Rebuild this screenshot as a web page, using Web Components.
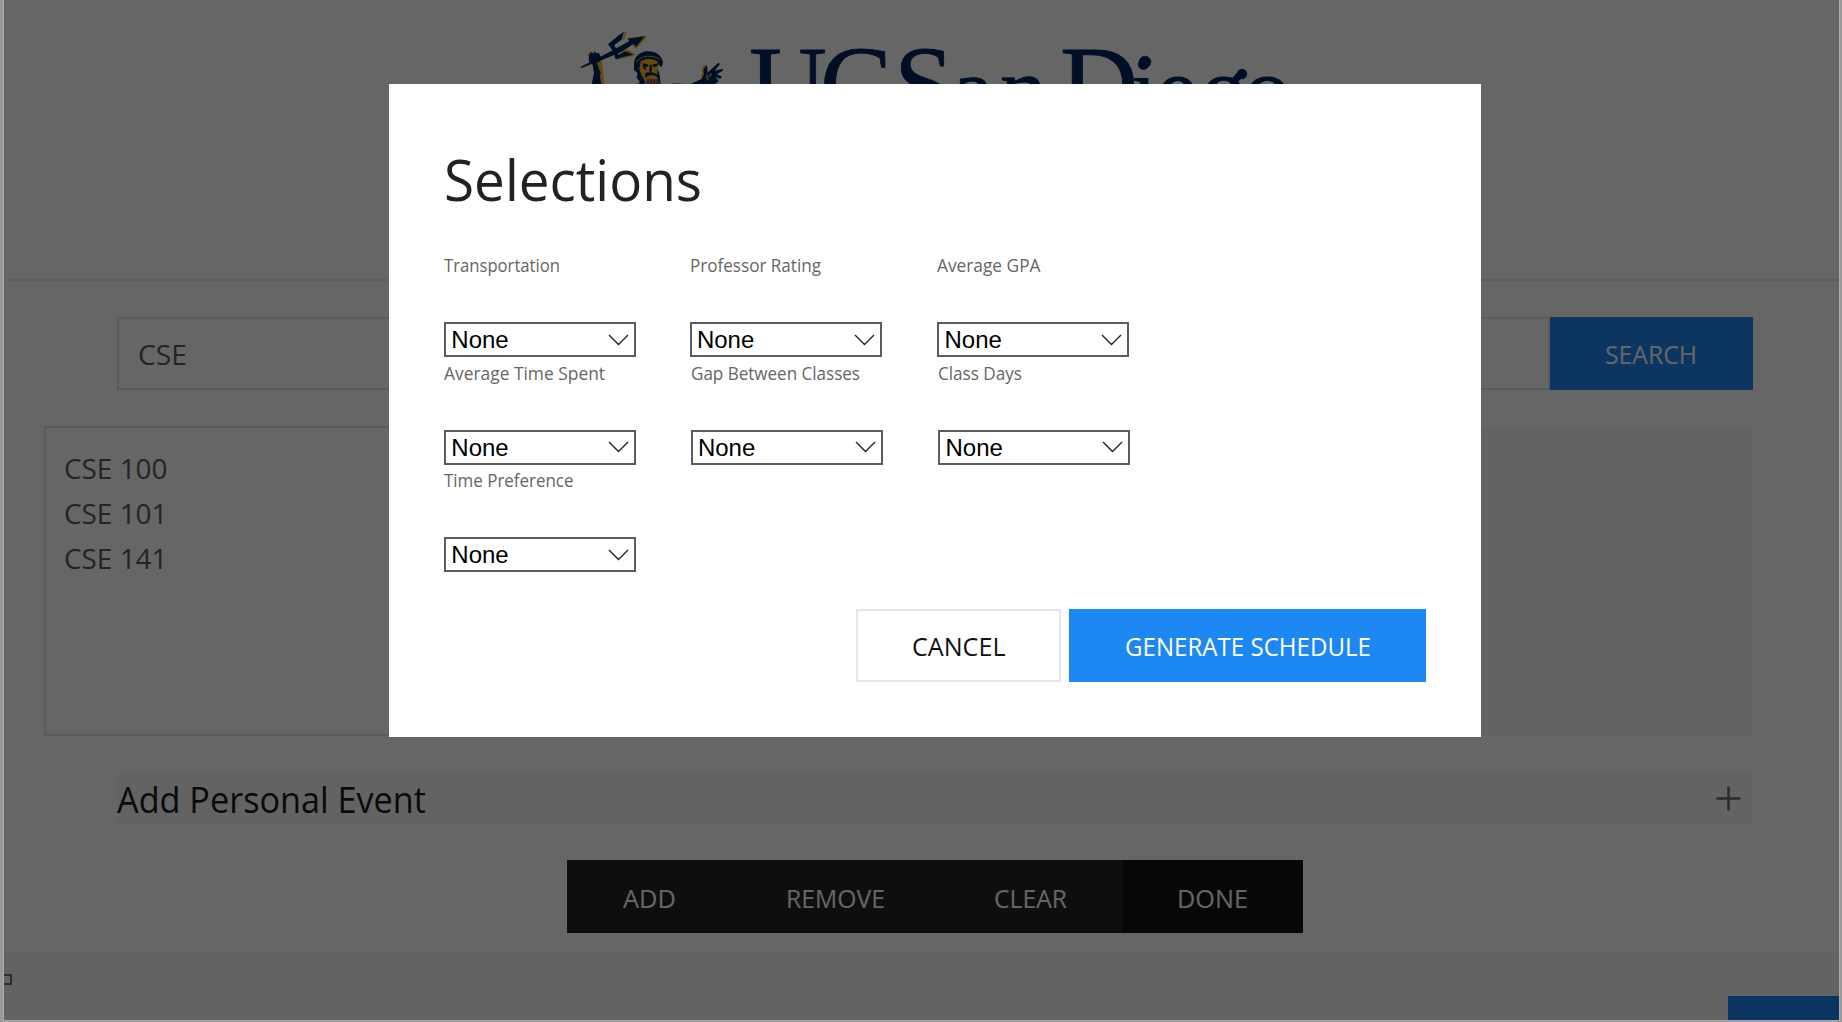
<!DOCTYPE html>
<html lang="en">
<head>
<meta charset="utf-8">
<title>Schedule planner</title>
<style>
html,body{margin:0;height:100%;overflow:hidden;background:#999}
body{font-family:"Open Sans","Noto Sans",sans-serif;color:#1a1a1a}
</style>
</head>
<body>
<planner-app></planner-app>
<script>
function define(name, html, ready) {
  const t = document.createElement('template');
  t.innerHTML = html;
  customElements.define(name, class extends HTMLElement {
    constructor() { super(); this.attachShadow({mode: 'open'}).appendChild(t.content.cloneNode(true)); }
    connectedCallback() { if (ready) ready(this, this.shadowRoot); }
  });
}

/* A single line of text condensed to a given width. */
define('fit-text', `
<style>:host{display:block;white-space:nowrap;flex:none}span{display:inline-block;transform-origin:0 50%}</style>
<span><slot></slot></span>`, (el, root) => {
  const s = root.querySelector('span'), w = +el.getAttribute('w');
  el.style.width = w + 'px';
  s.style.transform = 'scaleX(' + w / s.getBoundingClientRect().width + ')';
});

define('action-button', `
<style>
:host{display:flex;justify-content:center;box-sizing:border-box;height:73px;line-height:74px;font-size:26px;flex:none;color:#fff;background:#1e88f2}
:host([kind=outline]){background:#fff;color:#111;border:2.5px solid #e6e6e6;line-height:71px}
:host([kind=dark]){background:#252525;line-height:76px}
:host([kind=darker]){background:#121212;line-height:76px}
</style><slot></slot>`);

define('school-logo', `
<style>:host{display:block;height:120px}svg{display:block;margin-left:551px}</style>
<svg width="760" height="120" viewBox="555 0 760 120">
  <g transform="translate(570 24) scale(.33333)">
    <path fill="#ffb81c" d="M165 20l4 4-7 26-4-2zM172 42l57-7-1 6-28 33-6-2zM160 80l12-4 27 17-34 9-26 6zM50 96l12-16 8 14zM74 112l20-12 4 32 6 48H90z"/>
    <path fill="#002360" d="M31 129L100 94 150 67 178 51 172 44 224 37 198 68 190 60 155 83 105 104 34 132z"/>
    <path fill="#002360" d="M162 23L155 47 133 63 143 84 134 88 114 61 146 34z"/>
    <path fill="#002360" d="M131 86L145 79 145 93 166 82 190 92 162 98 137 106z"/>
    <path fill="#002360" d="M56 104L58 90 66 84 70 90 74 80 78 88 86 86 95 104 88 114 80 116 92 146 90 158 94 180H65L72 148 68 122 58 114z"/>
    <path fill="#ffb81c" d="M208 108Q236 92 268 112L264 138 270 180H204L208 138z"/>
    <path fill="#002360" d="M192 124Q190 92 226 82 262 78 276 104 282 118 274 130L266 122 262 112Q238 98 212 112L208 136 214 152 210 172 200 162 202 146 192 138z"/>
    <path fill="none" stroke="#ffb81c" stroke-width="2.5" d="M198 112Q230 84 272 106"/>
    <path fill="#002360" d="M218 118l18 4-2 6-8 0 2 12-8-8zM246 122l18-4-2 8-10 4zM240 122l5 0 1 20-8 2zM214 152l12 22-4 6h-14zM226 148q16-8 34 2l6 12-14-8h-14l-12 8zM262 134l6 14 4 32h-8l-2-24z"/>
    <path fill="#cc8850" d="M230 165h34l4 15h-42z"/>
    <path fill="none" stroke="#002360" stroke-width="3" d="M234 166v14M243 166v14M252 166v14M261 167v13"/>
    <path fill="#ffb81c" d="M398 130l8-10 6 24 20-12 4 24-14 16-30 6z"/>
    <path fill="#002360" d="M362 180L396 164 402 148 400 136 411 124 413 146 445 116 450 120 434 140 458 134 458 141 440 150 456 158 450 165 436 158 446 172 434 180z"/>
    <path fill="none" stroke="#ffb81c" stroke-width="4" d="M410 152l4 16M424 148l-6 10"/>
    <path fill="#8b98a8" d="M302 180q18-6 38 0z"/>
  </g>
  <g fill="#002360" stroke="#002360" stroke-width=".8" font-family="Liberation Serif, serif" font-size="108">
    <text y="121" x="749 820">UC</text>
    <text y="121" x="894 952 1000">S<tspan font-size="94">an</tspan></text>
    <text y="121" x="1060 1131 1156 1201 1244">D<tspan font-size="94">iego</tspan></text>
    <circle cx="1145" cy="62" r="5.8"/><circle cx="1242" cy="74" r="4.8"/>
    <path fill="none" stroke-width="3" d="M1232 84q3-10 10-12"/>
  </g>
</svg>`);

define('course-list', `
<style>
:host{display:block;box-sizing:border-box;width:818px;height:310px;border:2px solid #e4e4e4;padding:19px 0 0 18px;font-size:27px;line-height:44.6px;color:#5a5a5a}
</style><slot></slot>`);

define('planner-page', `
<style>
:host{display:block;height:1020px;background:#fff}
header{height:279px;border-bottom:2px solid #ebebeb;overflow:hidden}
.search{display:flex;margin:36.4px 86px 0 113px;height:73px}
.field{flex:1;box-sizing:border-box;border:2px solid #e4e4e4;padding:1px 0 0 19px;font-size:26.5px;line-height:71px;color:#5a5a5a}
.lists{display:flex;justify-content:space-between;margin:36px 86px 0 40px}
.picked{width:818px;background:#f8f8f8}
.event{display:flex;justify-content:space-between;align-items:center;height:51px;margin:36.6px 86px 0 113px;background:#f8f8f8;font-size:36px;line-height:48px}
.event fit-text{padding-top:3px}
.event svg{margin-right:12.5px}
.bar{display:flex;width:736px;margin:36px 0 0 563px}
footer{margin-top:18px;height:69px;background:#f8f8f8;display:flex;justify-content:space-between}
.stub{box-sizing:border-box;width:8px;height:11px;border:2px solid #777;border-left:0;margin-top:23px}
.corner{width:111px;height:24px;margin-top:45px;background:#1b84f0}
</style>
<header><school-logo></school-logo></header>
<div class="search"><div class="field"><fit-text w="49">CSE</fit-text></div>
<action-button style="width:203.5px"><fit-text w="92">SEARCH</fit-text></action-button></div>
<div class="lists"><course-list><fit-text w="103.5">CSE 100</fit-text><fit-text w="103.5">CSE 101</fit-text><fit-text w="103.5">CSE 141</fit-text></course-list><div class="picked"></div></div>
<div class="event"><fit-text w="309">Add Personal Event</fit-text>
<svg width="25" height="25" viewBox="0 0 25 25"><path d="M12.5 .5v24M.5 12.5h24" stroke="#666" stroke-width="2.4"/></svg></div>
<div class="bar">
<action-button kind="dark" style="width:164px"><fit-text w="53">ADD</fit-text></action-button>
<action-button kind="dark" style="width:208px"><fit-text w="99">REMOVE</fit-text></action-button>
<action-button kind="dark" style="width:183px"><fit-text w="73">CLEAR</fit-text></action-button>
<action-button kind="darker" style="width:181px"><fit-text w="71">DONE</fit-text></action-button></div>
<footer><div class="stub"></div><div class="corner"></div></footer>`);

define('select-field', `
<style>
:host{display:flex;flex-direction:column;gap:45px;align-items:flex-start;font-size:17.6px;line-height:24px;color:#666}
.box{display:flex;justify-content:space-between;align-items:center;box-sizing:border-box;width:192px;height:35px;border:2px solid #5c5c5c;padding:0 5px 0 5.3px;font:24px/33px "Liberation Sans",Arial,sans-serif;color:#000}
</style>
<fit-text></fit-text>
<div class="box"><span>None</span><svg width="21" height="12" viewBox="0 0 21 12"><path d="M1 1l9.5 9.5L20 1" fill="none" stroke="#222" stroke-width="1.4"/></svg></div>`,
(el, root) => {
  const f = root.querySelector('fit-text');
  f.textContent = el.getAttribute('label');
  const w = +el.getAttribute('w'), s = f.shadowRoot.querySelector('span');
  s.style.transform = 'none';
  s.style.transform = 'scaleX(' + w / s.getBoundingClientRect().width + ')';
  f.style.width = w + 'px';
});

define('selection-dialog', `
<style>
:host{display:block;box-sizing:border-box;width:1091.5px;height:653.4px;background:#fff;padding:57px 54.5px 0 55px;color:#222}
h1{margin:0;font-size:56px;line-height:75px;font-weight:400}
h1 fit-text{padding-top:1px;margin-bottom:-1px}
.grid{display:grid;grid-template-columns:245.6px 247.6px auto;row-gap:3.5px;margin-top:37px}
.shift{padding-left:1px}
.actions{display:flex;justify-content:flex-end;gap:8px;margin-top:37.4px}
</style>
<h1><fit-text w="258">Selections</fit-text></h1>
<div class="grid">
<select-field label="Transportation" w="116"></select-field>
<select-field label="Professor Rating" w="131"></select-field>
<select-field label="Average GPA" w="103.5"></select-field>
<select-field label="Average Time Spent" w="161"></select-field>
<select-field class="shift" label="Gap Between Classes" w="169"></select-field>
<select-field class="shift" label="Class Days" w="84"></select-field>
<select-field label="Time Preference" w="129.5"></select-field>
</div>
<div class="actions">
<action-button kind="outline" style="width:205px"><fit-text w="93.5">CANCEL</fit-text></action-button>
<action-button style="width:357px"><fit-text w="246">GENERATE SCHEDULE</fit-text></action-button></div>`);

define('planner-app', `
<style>
:host{display:block;position:relative;width:1842px;height:1022px;overflow:hidden;background:#999}
planner-page{width:1835px;margin-left:4px}
.shade{position:absolute;inset:0 3px 2px 4px;background:rgba(0,0,0,.6);box-shadow:0 0 0 1px #aaa;display:flex;align-items:flex-start}
selection-dialog{margin:84px 0 0 385px}
</style>
<planner-page></planner-page>
<div class="shade"><selection-dialog></selection-dialog></div>`);
</script>
</body>
</html>
